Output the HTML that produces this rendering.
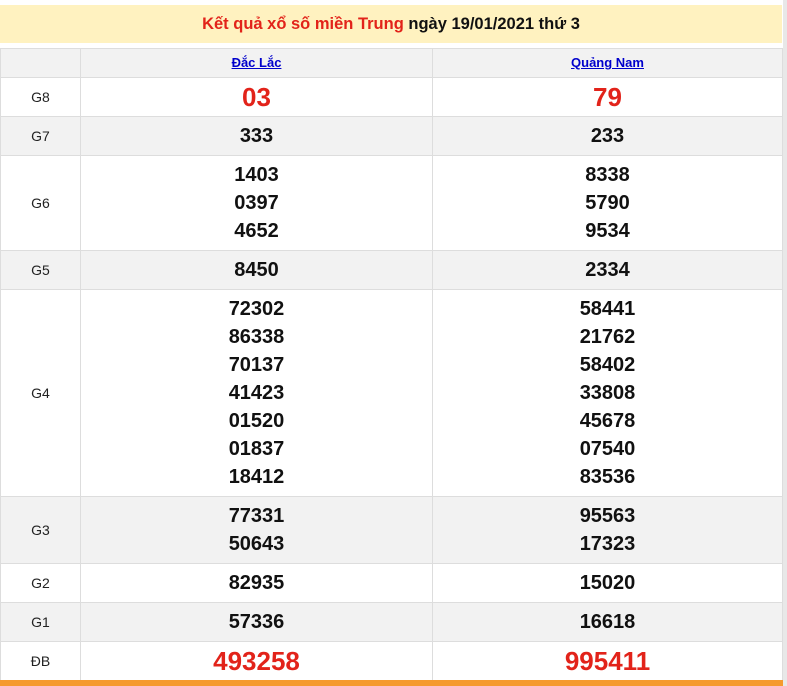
<!DOCTYPE html><html><head><meta charset="utf-8"><style>
body{margin:0;width:787px;height:686px;overflow:hidden;background:#fff;font-family:"Liberation Sans",sans-serif;position:relative}
.sb{position:absolute;right:0;top:0;width:4px;height:686px;background:#e8e8e8}
.hd{position:absolute;left:0;top:5px;width:782px;height:38px;background:#fff2c0;text-align:center;line-height:38px;font-size:16.5px;font-weight:bold;color:#111}
.hd span{color:#e2231a}
table{position:absolute;left:0;top:48px;width:783px;border-collapse:collapse;table-layout:fixed}
td{border:1px solid #ddd;text-align:center;padding:5px 0;line-height:28px;font-size:20px;font-weight:bold;color:#111}
td:first-child{font-size:14px;font-weight:normal;color:#222}
tr.g td{background:#f2f2f2}
tr.h td{padding:0;height:28px;font-size:13px;line-height:28px}
tr.h a{color:#00c;text-decoration:underline;font-weight:bold}
.r{color:#e2231a;font-size:26px}
.ob{position:absolute;left:0;top:680px;width:783px;height:6px;background:#f59a2f}
</style></head><body>
<div class="sb"></div>
<div class="hd"><span>Kết quả xổ số miền Trung</span> ngày 19/01/2021 thứ 3</div>
<table>
<colgroup><col style="width:80px"><col style="width:352px"><col></colgroup>
<tr class="h g"><td></td><td><a>Đắc Lắc</a></td><td><a>Quảng Nam</a></td></tr>
<tr><td>G8</td><td class="r">03</td><td class="r">79</td></tr>
<tr class="g"><td>G7</td><td>333</td><td>233</td></tr>
<tr><td>G6</td><td>1403<br>0397<br>4652</td><td>8338<br>5790<br>9534</td></tr>
<tr class="g"><td>G5</td><td>8450</td><td>2334</td></tr>
<tr><td>G4</td><td>72302<br>86338<br>70137<br>41423<br>01520<br>01837<br>18412</td><td>58441<br>21762<br>58402<br>33808<br>45678<br>07540<br>83536</td></tr>
<tr class="g"><td>G3</td><td>77331<br>50643</td><td>95563<br>17323</td></tr>
<tr><td>G2</td><td>82935</td><td>15020</td></tr>
<tr class="g"><td>G1</td><td>57336</td><td>16618</td></tr>
<tr><td>ĐB</td><td class="r">493258</td><td class="r">995411</td></tr>
</table>
<div class="ob"></div>
</body></html>
